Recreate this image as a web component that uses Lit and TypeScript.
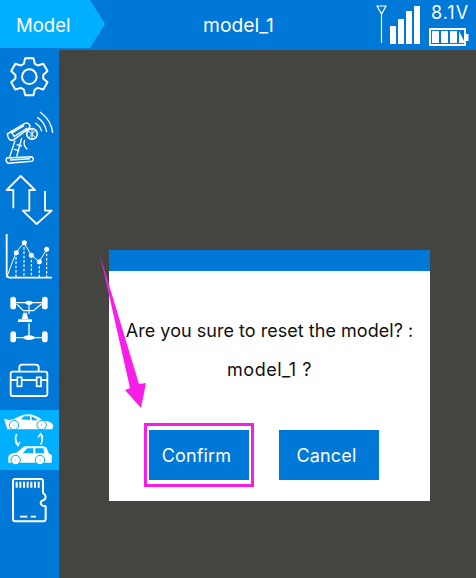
import { LitElement, html, css, svg } from "lit";
import { customElement } from "lit/decorators.js";

const gearPath = (() => {
  const cx = 88, cy = 80, n = 6, ro = 57, ri = 42;
  let d = "";
  for (let i = 0; i < n; i++) {
    const a = (-90 + i * 60) * Math.PI / 180;
    const w = 0.22, g = 0.4;
    const pts: [number, number][] = [[ri, a - g], [ro, a - w], [ro, a + w], [ri, a + g]];
    pts.forEach(([r, t], j) => {
      const x = (cx + r * Math.cos(t)).toFixed(1), y = (cy + r * Math.sin(t)).toFixed(1);
      d += (i === 0 && j === 0 ? "M" : "L") + x + " " + y + " ";
    });
  }
  return d + "Z";
})();

const wheel = (x: number, y: number) => svg`<circle cx=${x} cy=${y} r="14" fill="#fff" stroke="var(--c)" stroke-width="3"/><circle cx=${x} cy=${y} r="4" fill="var(--c)"/>`;

const icons = [
  svg`<path d=${gearPath} stroke-linejoin="round" stroke-width="6"/><circle cx="88" cy="80" r="22" stroke-width="6"/>`,
  svg`<path d="M120 6q34 24 38 63M112 22q24 16 28 44M105 39q16 8 20 25" stroke-width="4"/>
      <path d="M22 72L75 40q10-4 15 6l-2 8-48 36q-15 4-18-18z" stroke-width="4.500" fill="var(--c)"/>
      <path d="M34 70L72 47M42 80L82 54M32 62l12 20" stroke-width="4"/>
      <circle cx="96" cy="72" r="16" stroke-width="5"/><path d="M84 62l22 20M106 60L86 84M96 56v32" stroke-width="3"/>
      <path d="M45 92L28 144M65 84L50 140M74 90q-6 16 8 28M50 104l16 4M42 118l16 4" stroke-width="4"/>
      <path d="M20 144L95 140q10 8 0 14L25 160q-10-6-5-16zM30 150l60-4" stroke-width="4.500"/>`,
  svg`<path d="M40 115V60H20L62 18l43 42H88V122H68l42 40 45-40H135V63" stroke-linejoin="round" stroke-width="5.500"/>`,
  svg`<path d="M20 12V132q0 11 10 11h126" stroke-width="5.500"/><path d="M20 142L48 68 72 38 94 76 118 95 140 58" stroke-width="3"/>
      <path d="M48 68V142M72 38V142M94 76V142M118 95V142M140 58V142" stroke-dasharray="8 5" stroke-width="3.500"/>
      <g fill="#fff" stroke="none"><circle cx="49" cy="68" r="7.500"/><circle cx="73" cy="38" r="7.500"/><circle cx="94" cy="76" r="7.500"/><circle cx="118" cy="95" r="7.500"/><circle cx="140" cy="58" r="7.500"/></g>`,
  svg`<g fill="#fff" stroke="none"><rect x="31" y="20" width="17" height="38" rx="8"/><rect x="126" y="20" width="17" height="38" rx="8"/><rect x="31" y="124" width="17" height="33" rx="8"/><rect x="126" y="124" width="17" height="33" rx="8"/><ellipse cx="87" cy="38" rx="11" ry="6"/><ellipse cx="87" cy="143" rx="17" ry="7"/><rect x="54" y="88" width="42" height="8"/><path d="M65 88L70 68H80L85 88z"/></g>
      <path d="M46 38H128M46 143H128M87 100V140" stroke-width="4"/>
      <path d="M50 42L70 62H100L125 42M87 40V72" stroke-width="3.500"/>`,
  svg`<rect x="32" y="65" width="110" height="73" rx="6" stroke-width="5.500"/><path d="M58 65V52q0-8 8-8h42q8 0 8 8v13M32 90H52M65 90h45M123 90h19" stroke-width="5.500"/>
      <rect x="52" y="82" width="13" height="27" stroke-width="5"/><rect x="110" y="82" width="13" height="27" stroke-width="5"/>`,
  svg`<g fill="#fff" stroke="none"><path d="M12 26l16 4q14-2 24-8 26-14 50-6 14 4 28 16 26 2 30 14l-3 12H22z"/><path d="M25 158v-18q2-10 24-12l20-16q2-3 10-3h50q10 0 12 8l6 14q12 2 8 12v15z"/></g>
      <path d="M62 28L72 19H90V30zM95 19l20 12H95zM82 115h18v15H68zM106 115h24l3 15h-27z" fill="var(--c)" stroke="none"/>
      ${wheel(42, 45)}${wheel(125, 45)}${wheel(47, 150)}${wheel(120, 150)}
      <path d="M50 72q-8 16 4 32M122 104q10-16 0-32" stroke-width="5"/><path d="M46 96l8 11 6-11M114 82l8-11 7 11" stroke-width="4"/>`,
  svg`<path d="M46 27H122q7 0 7 7v32q0 6 6 8l2 8q0 6-6 8-9 3-9 9 0 6 6 8l9 2v38q0 7-7 7H46q-7 0-7-7V34q0-7 7-7z" stroke-linejoin="round" stroke-width="6"/>
      <path d="M50 35v18M61 35v18M72 35v18M83 35v18M94 35v18M105 35v18M116 35v18" stroke-width="6"/>
      <path d="M60 140H82M92 140H108" stroke-width="5.500"/>`,
];

@customElement("app-root")
export class AppRoot extends LitElement {
  static styles = css`
    :host { display: block; width: 476px; height: 578px; overflow: hidden; font-family: Inter, "Noto Sans", sans-serif; }
    .page { width: 476px; height: 578px; display: grid; grid-template-rows: 50px 1fr; grid-template-columns: 59px 1fr; background: #444541; position: relative; }
    .top { grid-column: 1 / 3; background: #0078d7; color: #fff; display: flex; align-items: flex-start; position: relative; }
    .tab { width: 105px; height: 48px; flex: none; background: #00b0ff; clip-path: polygon(0 0, 90px 0, 105px 24px, 90px 48px, 0 48px); box-sizing: border-box; padding-left: 16px; line-height: 51px; font-size: 18.500px; }
    .title { position: absolute; left: 203px; top: 0; line-height: 51px; font-size: 19.300px; }
    .status { margin-left: auto; display: block; }
    .side { background: #0078d7; display: flex; flex-direction: column; }
    .item { height: 60px; flex: none; --c: #0078d7; }
    .item.on { background: #00b0ff; --c: #00b0ff; }
    .item svg { display: block; width: 60px; height: 60px; fill: none; stroke: #fff; stroke-width: 5; }
    .main { display: flex; padding: 200px 0 0 50px; }
    .dialog { width: 321px; height: 251px; background: #fff; display: flex; flex-direction: column; color: #111; font-size: 18px; }
    .dh { height: 21px; background: #0078d7; flex: none; }
    .msg { height: 34px; text-align: center; line-height: 34px; white-space: nowrap; }
    .msg.first { margin-top: 43px; letter-spacing: 0.03px; }
    .msg.second { margin-top: 5px; letter-spacing: 0.5px; }
    .btns { display: flex; gap: 30px; padding: 43px 0 0 40px; }
    .btn { width: 100px; height: 50px; box-sizing: border-box; padding-right: 5px; background: #0078d7; color: #fff; text-align: center; line-height: 51px; font-size: 18px; letter-spacing: 0.15px; position: relative; }
    .btn.hl::after { content: ""; position: absolute; inset: -7px -5px; border: 3px solid #f81ee8; }
    .arrow { position: absolute; left: 0; top: 0; pointer-events: none; }
  `;

  render() {
    return html`<div class="page">
      <header class="top">
        <div class="tab">Model</div>
        <div class="title">model_1</div>
        <svg class="status" width="100" height="50" viewBox="376 0 100 50">
          <path d="M377 6h9l-4.500 8zM381.500 13v30" fill="none" stroke="#fff" stroke-width="1.200"/>
          <g fill="#fff">
            <rect x="390" y="26" width="6" height="18"/><rect x="398" y="19" width="6" height="25"/>
            <rect x="406" y="11" width="6" height="33"/><rect x="414" y="6" width="6" height="38"/>
            <rect x="430" y="29" width="35" height="16" fill="none" stroke="#fff" stroke-width="2"/>
            <rect x="465" y="34" width="3.500" height="7"/>
            <rect x="432" y="31" width="7" height="12"/><rect x="441" y="31" width="7" height="12"/><rect x="450" y="31" width="7" height="12"/>
            <path d="M459 31l6 12h-6z"/>
          </g>
          <text x="431" y="18.500" fill="#fff" font-size="18" letter-spacing="1">8.1V</text>
        </svg>
      </header>
      <nav class="side">
        ${icons.map((ic, i) => html`<div class="item ${i === 6 ? "on" : ""}"><svg viewBox="0 0 180 180">${ic}</svg></div>`)}
      </nav>
      <main class="main">
        <section class="dialog">
          <div class="dh"></div>
          <div class="msg first">Are you sure to reset the model? :</div>
          <div class="msg second">model_1 ?</div>
          <div class="btns">
            <div class="btn hl">Confirm</div>
            <div class="btn">Cancel</div>
          </div>
        </section>
      </main>
      <svg class="arrow" width="476" height="578"><path d="M100 255L139 384 146 383 141 408 125 390 130 388z" fill="#f81ee8"/></svg>
    </div>`;
  }
}
